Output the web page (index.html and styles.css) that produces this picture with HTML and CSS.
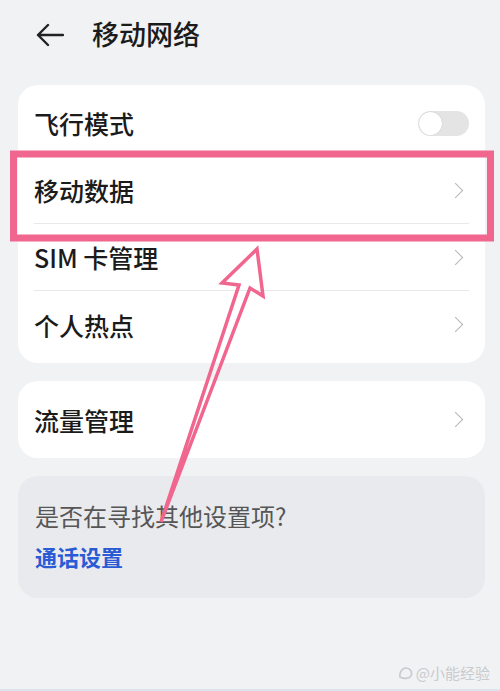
FILE: index.html
```html
<!DOCTYPE html>
<html>
  <head>
    <title>移动网络</title>
    <link rel="stylesheet" href="styles.css">
  </head>
  <body>
    <div class="screen">
      <header class="topbar">
        <svg class="back" width="28" height="24" viewBox="0 0 28 24">
          <path d="M12 2 L2 12 L12 22 M2 12 H27" fill="none" stroke="#222" stroke-width="2.4" stroke-linecap="round" stroke-linejoin="round"/>
        </svg>
        <h1 class="title">移动网络</h1>
      </header>

      <section class="card">
        <div class="row">
          <span class="label">飞行模式</span>
          <span class="switch"><span class="knob"></span></span>
        </div>
        <div class="row">
          <span class="label">移动数据</span>
          <span class="chev"></span>
        </div>
        <div class="row">
          <span class="label">SIM 卡管理</span>
          <span class="chev"></span>
        </div>
        <div class="row">
          <span class="label">个人热点</span>
          <span class="chev"></span>
        </div>
      </section>

      <section class="card">
        <div class="row">
          <span class="label">流量管理</span>
          <span class="chev"></span>
        </div>
      </section>

      <section class="card hint">
        <p class="hint-text">是否在寻找其他设置项?</p>
        <a class="hint-link">通话设置</a>
      </section>

      <div class="watermark">
        <svg width="16" height="14" viewBox="0 0 16 14">
          <path d="M2 11 C1 7 4 2 8 2 C12 2 15 6 13 10 C11 13 5 13 2 11 Z" fill="none" stroke="#c9cbce" stroke-width="1.6"/>
        </svg>
        <span>@小能经验</span>
      </div>
    </div>

    <!-- annotation overlay -->
    <svg class="overlay" width="500" height="691" viewBox="0 0 500 691">
      <rect x="13.5" y="154" width="477" height="84" fill="none" stroke="#f0668f" stroke-width="7"/>
      <path d="M161 522 L239 285 L222 283 L257 249 L263 296 L250 288 Z" fill="none" stroke="#f0668f" stroke-width="3.5" stroke-linejoin="miter"/>
    </svg>
  </body>
</html>
```

FILE: styles.css
```css
body {
  margin: 0;
  background: #f1f2f4;
  font-family: "Noto Sans CJK SC", "Noto Sans", sans-serif;
  color: #1b1b1b;
}

.screen {
  position: relative;
  height: 689px;
  padding: 0 15px 0 18px;
  border-bottom: 2px solid #dde3ec;
  display: flex;
  flex-direction: column;
  gap: 18px;
}

.topbar {
  height: 67px;
  display: flex;
  align-items: center;
  padding-left: 18px;
  gap: 28px;
}

.back {
  margin-top: 2px;
}

.title {
  margin: 0;
  font-size: 27px;
  font-weight: 500;
  color: #1b1b1b;
}

.card {
  background: #fff;
  border-radius: 20px;
  padding: 5px 0;
}

.row {
  height: 67px;
  margin: 0 16px;
  display: flex;
  align-items: center;
  justify-content: space-between;
  border-bottom: 1px solid #e8e8e8;
  box-sizing: border-box;
}

.row:last-child {
  border-bottom: none;
}

.label {
  font-size: 25px;
  font-weight: 500;
}

.switch {
  width: 51px;
  height: 25px;
  border-radius: 13px;
  background: #e4e4e4;
  display: flex;
  align-items: center;
  padding: 0 1px;
  box-sizing: border-box;
}

.knob {
  width: 23px;
  height: 23px;
  border-radius: 50%;
  background: #fff;
  box-shadow: 0 0 1px rgba(0, 0, 0, 0.25);
}

.chev {
  width: 10px;
  height: 10px;
  border-top: 1.5px solid #b5b5b5;
  border-right: 1.5px solid #b5b5b5;
  transform: rotate(45deg);
  margin-right: 8px;
}

.hint {
  background: #e9eaed;
  padding: 22px 17px 26px;
}

.hint-text {
  margin: 0;
  font-size: 24px;
  color: #565656;
  line-height: 36px;
}

.hint-link {
  display: block;
  margin-top: 6px;
  font-size: 22px;
  font-weight: 700;
  color: #2a5ad4;
  line-height: 32px;
}

.watermark {
  position: absolute;
  right: 10px;
  bottom: 6px;
  display: flex;
  align-items: center;
  gap: 2px;
  font-size: 15px;
  color: #c9cbce;
}

.overlay {
  position: absolute;
  top: 0;
  left: 0;
  pointer-events: none;
}
```
